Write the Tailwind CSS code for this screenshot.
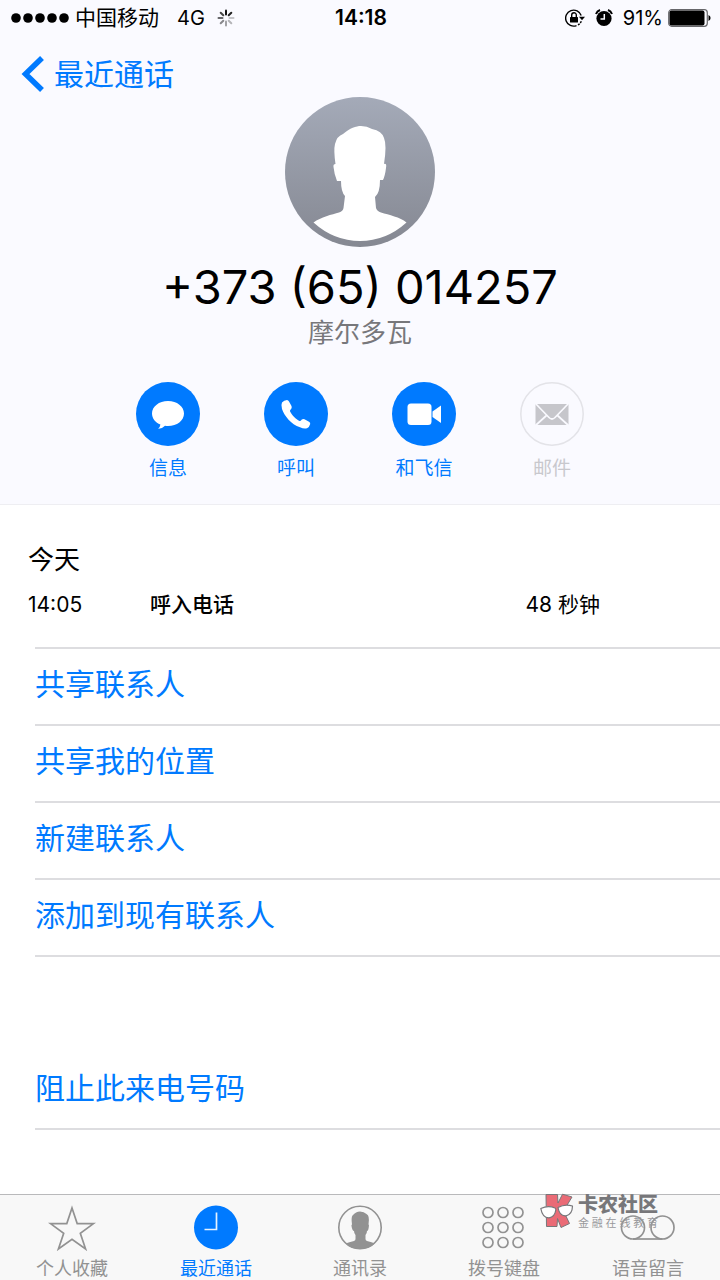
<!DOCTYPE html>
<html lang="zh-CN">
<head>
<meta charset="utf-8">
<meta name="viewport" content="width=device-width, initial-scale=1">
<title>最近通话</title>
<script src="https://cdn.jsdelivr.net/npm/@tailwindcss/browser@4"></script>
</head>
<body class="min-h-screen flex flex-col bg-white text-black font-['Inter','Noto_Sans_CJK_SC',sans-serif]">
<header class="bg-[#fafaff] border-b border-[#eeeef2] pb-5">
  <div class="grid grid-cols-3 items-center h-9 pl-[11px] pr-[9px] text-xl leading-9">
    <div class="flex items-center whitespace-nowrap">
      <svg class="w-[58px] h-3 shrink-0" viewBox="0 0 58 12" aria-hidden="true"><circle cx="5" cy="6" r="4.8"/><circle cx="17" cy="6" r="4.8"/><circle cx="29" cy="6" r="4.8"/><circle cx="41" cy="6" r="4.8"/><circle cx="53" cy="6" r="4.8"/></svg>
      <span class="ml-[6px] text-[21px]">中国移动</span>
      <span class="ml-[18px]">4G</span>
      <svg class="ml-3 w-[18px] h-[18px] shrink-0" viewBox="0 0 18 18" fill="none" stroke-width="2" stroke-linecap="round" aria-hidden="true">
        <path d="M9 1.500v4" stroke="#111"/><path d="M14.300 3.700l-2.600 2.600" stroke="#222"/><path d="M16.500 9h-4" stroke="#c4c4c8"/><path d="M14.300 14.300l-2.600-2.600" stroke="#b4b4b8"/><path d="M9 16.500v-4" stroke="#a0a0a4"/><path d="M3.700 14.300l2.600-2.600" stroke="#88888c"/><path d="M1.500 9h4" stroke="#66666a"/><path d="M3.700 3.700l2.600 2.600" stroke="#444"/>
      </svg>
    </div>
    <time class="text-center text-[21px] font-semibold">14:18</time>
    <div class="flex items-center justify-end">
      <svg class="w-5 h-[18px] shrink-0" viewBox="0 0 20 18" fill="none" stroke="#000" aria-hidden="true">
        <path d="M16.200 6.500A8 8 0 1 0 11.500 16.600" stroke-width="1.400"/><path d="M13 16A8 8 0 0 0 16.400 12" stroke-width="1.400" stroke-dasharray="2 1"/><path d="M14 7.800h6l-3 3.400z" fill="#000" stroke="none"/>
        <rect x="5" y="8" width="8" height="5.500" rx=".5" fill="#000" stroke="none"/><path d="M6.700 8V6a2.300 2.300 0 0 1 4.600 0v2" stroke-width="1.400"/>
      </svg>
      <svg class="ml-[10px] w-[18px] h-[18px] shrink-0" viewBox="0 0 18 18" fill="none" aria-hidden="true">
        <circle cx="9" cy="9.500" r="7.600" fill="#000"/><path d="M1 5a7 7 0 0 1 4-4M17 5a7 7 0 0 0-4-4" stroke="#000" stroke-width="2"/><path d="M9.300 5v5H5.500" stroke="#fafaff" stroke-width="1.500"/>
      </svg>
      <span class="ml-[10px]">91%</span>
      <svg class="ml-[5px] w-[43px] h-[18px] shrink-0" viewBox="0 0 43 18" aria-hidden="true">
        <rect x=".7" y=".7" width="38.600" height="16.600" rx="3" fill="none" stroke="#66666a" stroke-width="1.200"/><rect x="1.500" y="1.500" width="35" height="15" rx="2"/><path d="M40.500 6a3.200 3.200 0 0 1 0 6z"/>
      </svg>
    </div>
  </div>
  <nav class="h-[61px] pt-[14px] pl-[21px] flex items-center">
    <a href="#" class="flex items-center text-[#007aff] text-[30px] leading-[46px]">
      <svg class="w-[23px] h-9 mr-[10px]" viewBox="0 0 23 36" fill="none" stroke="#007aff" stroke-width="5.500" aria-hidden="true"><path d="M21 2L4.500 18 21 34"/></svg>最近通话</a>
  </nav>
  <svg class="block mx-auto w-[150px] h-[150px]" viewBox="0 0 150 150" role="img" aria-label="联系人头像">
    <defs><linearGradient id="g" x1="0" y1="0" x2="0" y2="1"><stop offset="0" stop-color="#a4aab8"/><stop offset="1" stop-color="#858892"/></linearGradient></defs>
    <circle cx="75" cy="75" r="75" fill="url(#g)"/>
    <path fill="#fff" d="M28.500 125.500C36 120 47 117.500 54 115.500Q58 114 58.500 111L60 99Q56 95 56 84H52Q49 76 48.500 70Q48 67 50.500 67Q48.500 53 50 47Q52 39 58 37C65 31 71 29 76 29Q82 29 87 32Q97 34 99 41Q102 48 99 67Q102 66 101 71Q100 79 98 83H95Q95 96 90 100L91 111Q92 114 96 115.500C104 118 115 120 121.500 125.500Q101 144 75 144T28.500 125.500Z"/>
  </svg>
  <h1 class="mt-[10px] text-center text-[47px] leading-[60px]">+373 (65) 014257</h1>
  <p class="text-center text-[26px] leading-8 text-[#77777b]">摩尔多瓦</p>
  <div class="mt-[33px] flex justify-center gap-16 text-[19px] leading-[30px] text-[#007aff] whitespace-nowrap">
    <button class="w-16 flex flex-col items-center gap-2">
      <svg class="w-16 h-16" viewBox="0 0 64 64" aria-hidden="true"><circle cx="32" cy="32" r="32" fill="#007aff"/><path fill="#fff" d="M32 19c9 0 16 5.500 16 12.500S41 44 32 44q-1.500 0-3-.2Q26 47 22.200 46.800q2-1.800 2.200-4.300C19.500 40.500 16 36.500 16 31.500 16 24.500 23 19 32 19z"/></svg>信息</button>
    <button class="w-16 flex flex-col items-center gap-2">
      <svg class="w-16 h-16" viewBox="0 0 64 64" aria-hidden="true"><circle cx="32" cy="32" r="32" fill="#007aff"/><path fill="#fff" d="M18 20.500Q20 18 23 18q1.300.2 2 1.500l2.500 4.500q.6 1.600-.3 3-1.400 1-1.200 2.200c2 4 6 8 9.500 9.800q1 .3 2.300-1.500 1.200-1 2.700-.3l4.500 2.500q1.500.8 1.200 2.300-.7 3-3.200 4.200-3 1-7-1C27 42.500 20.500 34 18 27q-1.200-4 0-6.500z"/></svg>呼叫</button>
    <button class="w-16 flex flex-col items-center gap-2">
      <svg class="w-16 h-16" viewBox="0 0 64 64" aria-hidden="true"><circle cx="32" cy="32" r="32" fill="#007aff"/><rect x="15.500" y="21.500" width="24" height="21.500" rx="3.500" fill="#fff"/><path fill="#fff" d="M40.500 29.500L49 23.500v17.500l-8.500-6z"/></svg>和飞信</button>
    <button disabled class="w-16 flex flex-col items-center gap-2 text-[#c8c8cd]">
      <svg class="w-16 h-16" viewBox="0 0 64 64" aria-hidden="true"><circle cx="32" cy="32" r="31.200" fill="none" stroke="#e3e3e8" stroke-width="1.500"/><path fill="#c6c6cb" d="M15.500 22h33v21h-33z"/><path d="M15.500 21.500L29 35.500q3 3 6 0L48.500 21.500M15.500 43.500L27 33M48.500 43.500L37 33" fill="none" stroke="#fafaff" stroke-width="1.700"/></svg>邮件</button>
  </div>
</header>
<main class="flex-1">
  <section class="pt-10 pb-[27px] px-7 leading-[30px]">
    <h2 class="text-[26px] leading-[30px]">今天</h2>
    <div class="mt-[15px] grid grid-cols-[122px_1fr_auto] pr-[92px] text-[21px] leading-[30px]">
      <time>14:05</time><span class="font-medium">呼入电话</span><span>48 秒钟</span>
    </div>
  </section>
  <div class="ml-[35px] border-t-2 border-[#dddde0] text-[30px] text-[#007aff]">
    <button class="block w-full h-[77px] pb-1 text-left border-b-2 border-[#dddde0]">共享联系人</button>
    <button class="block w-full h-[77px] pb-1 text-left border-b-2 border-[#dddde0]">共享我的位置</button>
    <button class="block w-full h-[77px] pb-1 text-left border-b-2 border-[#dddde0]">新建联系人</button>
    <button class="block w-full h-[77px] pb-1 text-left border-b-2 border-[#dddde0]">添加到现有联系人</button>
    <button class="block w-full h-[77px] pb-1 mt-24 text-left border-b-2 border-[#dddde0]">阻止此来电号码</button>
  </div>
</main>
<nav class="relative h-[86px] grid grid-cols-5 bg-[#f8f8f8] border-t border-[#b9b9bb] text-lg leading-6 text-[#929292] whitespace-nowrap">
  <a href="#" class="flex flex-col items-center pt-[10px] gap-[6px]">
    <svg class="w-12 h-[46px]" viewBox="0 0 48 46" fill="none" stroke="#929292" stroke-width="1.700" aria-hidden="true"><path d="M24 3l5.200 15.600H45.500L32.300 28.200 37.600 44 24 34.300 10.400 44 15.700 28.200 2.500 18.600H18.800z"/></svg>个人收藏</a>
  <a href="#" aria-current="page" class="flex flex-col items-center pt-[10px] gap-[6px] text-[#007aff]">
    <svg class="w-12 h-[46px]" viewBox="0 0 48 46" aria-hidden="true"><circle cx="24" cy="22.500" r="22" fill="#007aff"/><path d="M24.500 7.500v17h-12" fill="none" stroke="#e6f2ff" stroke-width="1.700"/></svg>最近通话</a>
  <a href="#" class="flex flex-col items-center pt-[10px] gap-[6px]">
    <svg class="w-12 h-[46px]" viewBox="0 0 48 46" aria-hidden="true"><circle cx="24" cy="22.500" r="21.200" fill="none" stroke="#929292" stroke-width="1.600"/><path fill="#929292" d="M9.500 38.500Q13 37 18 36q1.500-.4 1.500-2V30q-1.500-1.500-1.500-4-1.700 0-2.500-5-.2-1.500.5-1.500-1-7 .5-9Q20 6.500 24 6.500t6.500 2.500q3.500 1.500 2 10.500.7 0 .4 1.500-.4 5-1.900 5 0 2.500-1.500 4v4q0 1.600 1.500 2 5 1 8 2.500Q33 44 24 44T9.500 38.500z"/></svg>通讯录</a>
  <a href="#" class="flex flex-col items-center pt-[10px] gap-[6px]">
    <svg class="w-12 h-[46px]" viewBox="0 0 48 46" fill="none" stroke="#929292" stroke-width="1.700" aria-hidden="true"><circle cx="8" cy="7.500" r="5"/><circle cx="23" cy="7.500" r="5"/><circle cx="38" cy="7.500" r="5"/><circle cx="8" cy="22.500" r="5"/><circle cx="23" cy="22.500" r="5"/><circle cx="38" cy="22.500" r="5"/><circle cx="8" cy="37.500" r="5"/><circle cx="23" cy="37.500" r="5"/><circle cx="38" cy="37.500" r="5"/></svg>拨号键盘</a>
  <a href="#" class="flex flex-col items-center pt-[10px] gap-[6px]">
    <svg class="w-14 h-[46px]" viewBox="0 0 56 46" fill="none" stroke="#929292" stroke-width="1.700" aria-hidden="true"><circle cx="13" cy="22.500" r="11.500"/><circle cx="42.500" cy="22.500" r="11.500"/><path d="M13 34h29.500"/></svg>语音留言</a>
  <div class="pointer-events-none absolute right-[62px] -top-[2px] flex gap-1 text-[#77777a]">
    <svg class="w-[34px] h-9" viewBox="0 0 34 36" stroke="#77777a" stroke-linejoin="round" aria-hidden="true"><path d="M6 1.500L17.500 1.500 18 10 22.500 1.200 32 4 23.500 18 29.500 30.500 21 34.500 17.500 25.500 17 33.500 6.500 33.500z" fill="#ea6b76"/><path d="M.8 15.500Q8 12 15 15q1 .5.800 2-1 7-6.800 7.800-6.500.2-8.200-9.300zM18 14.500q7-4 14.500-1.500-.2 8.500-6.500 9.800-6.500.7-8-8.300z" fill="#fff" stroke-width="1.200"/></svg>
    <div class="w-20">
      <div class="text-xl leading-6 font-black">卡农社区</div>
      <div class="flex justify-between text-[11px] leading-3 text-[#99999c]"><span>金</span><span>融</span><span>在</span><span>线</span><span>教</span><span>育</span></div>
    </div>
  </div>
</nav>
</body>
</html>
